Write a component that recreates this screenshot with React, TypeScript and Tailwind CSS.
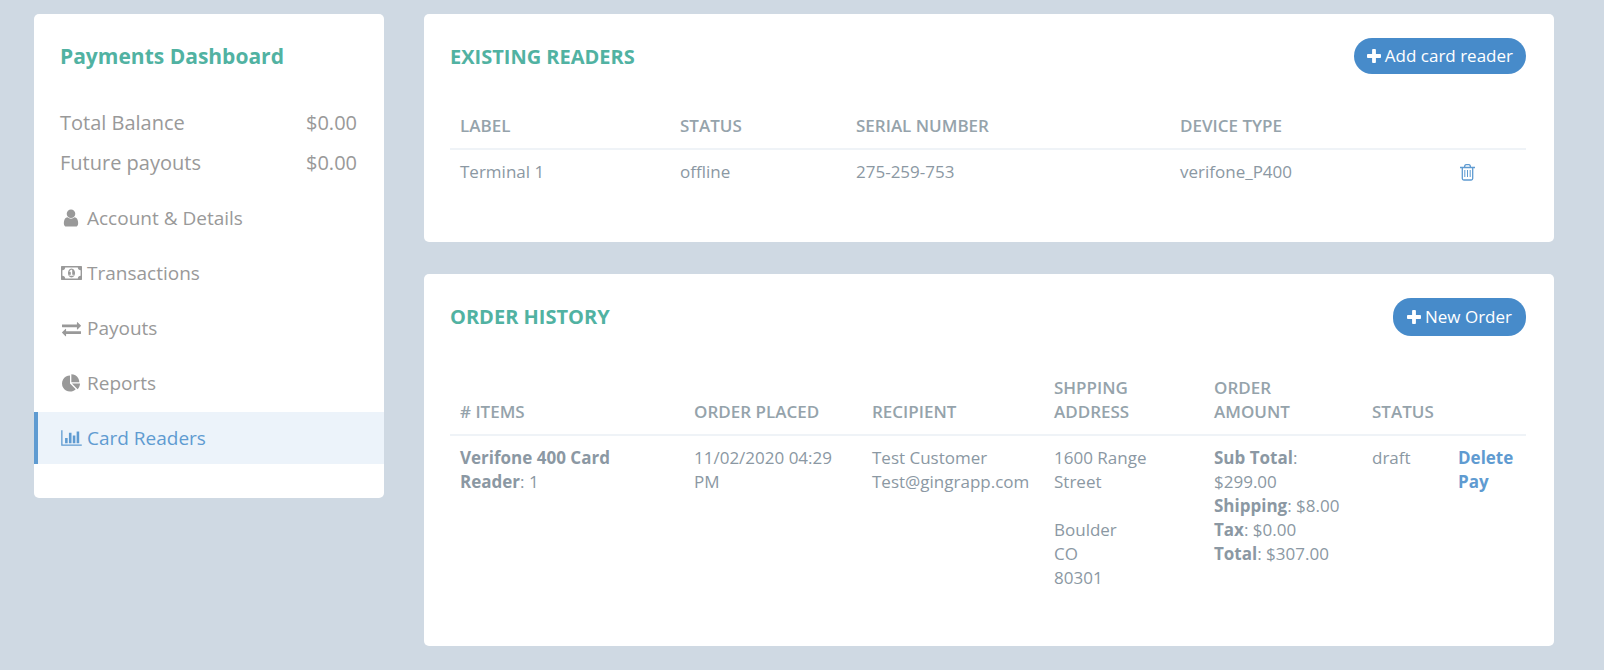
import type { ReactNode } from 'react';

interface IconProps {
  viewBox: string;
  className?: string;
  path: string;
}

const Icon: React.FC<IconProps> = ({ viewBox, className, path }) => (
  <svg viewBox={viewBox} className={className} fill="currentColor" aria-hidden="true">
    <path d={path} />
  </svg>
);

const paths = {
  plus: 'M1600 736v192q0 40-28 68t-68 28h-416v416q0 40-28 68t-68 28h-192q-40 0-68-28t-28-68v-416h-416q-40 0-68-28t-28-68v-192q0-40 28-68t68-28h416v-416q0-40 28-68t68-28h192q40 0 68 28t28 68v416h416q40 0 68 28t28 68z',
  user: 'M1536 1399q0 109-62.5 187t-150.5 78h-854q-88 0-150.5-78t-62.5-187q0-85 8.5-160.5t31.5-152 58.5-131 94-89 134.5-34.5q131 128 313 128t313-128q76 0 134.5 34.5t94 89 58.5 131 31.5 152 8.5 160.5zm-256-887q0 159-112.5 271.5t-271.5 112.5-271.5-112.5-112.5-271.5 112.5-271.5 271.5-112.5 271.5 112.5 112.5 271.5z',
  money: 'M768 1152h384v-96h-128v-448h-114l-148 137 77 80q42-37 55-57h2v288h-128v96zm512-256q0 70-21 142t-59.5 134-101.5 101-138 39-138-39-101.5-101-59.5-134-21-142 21-142 59.5-134 101.5-101 138-39 138 39 101.5 101 59.5 134 21 142zm512 256v-512q-106 0-181-75t-75-181h-1152q0 106-75 181t-181 75v512q106 0 181 75t75 181h1152q0-106 75-181t181-75zm128-832v1152q0 26-19 45t-45 19h-1792q-26 0-45-19t-19-45v-1152q0-26 19-45t45-19h1792q26 0 45 19t19 45z',
  exchange: 'M1792 1184v192q0 13-9.5 22.5t-22.5 9.5h-1376v192q0 13-9.5 22.5t-22.5 9.5q-12 0-24-10l-319-320q-9-9-9-22 0-14 9-23l320-320q9-9 23-9 13 0 22.5 9.5t9.5 22.5v192h1376q13 0 22.5 9.5t9.5 22.5zm0-544q0 14-9 23l-320 320q-9 9-23 9-13 0-22.5-9.5t-9.5-22.5v-192h-1376q-13 0-22.5-9.5t-9.5-22.5v-192q0-13 9.5-22.5t22.5-9.5h1376v-192q0-14 9-23t23-9q12 0 24 10l319 319q9 9 9 23z',
  pie: 'M768 890l546 546q-106 108-247.5 168t-298.5 60q-209 0-385.5-103t-279.5-279.5-103-385.5 103-385.5 279.5-279.5 385.5-103v762zm187 6h773q0 157-60 298.5t-168 247.5zm709-128h-768v-768q209 0 385.5 103t279.5 279.5 103 385.5z',
  bars: 'M640 896v512h-256v-512h256zm384-512v1024h-256v-1024h256zm1024 1152v128h-2048v-1536h128v1408h1920zm-640-896v768h-256v-768h256zm384-384v1152h-256v-1152h256z',
};

const balances = [
  { label: 'Total Balance', amount: '$0.00' },
  { label: 'Future payouts', amount: '$0.00' },
];

const navItems = [
  { label: 'Account & Details', viewBox: '0 0 1792 1792', path: paths.user, iconClass: 'size-5' },
  { label: 'Transactions', viewBox: '0 0 1920 1792', path: paths.money, iconClass: 'h-5 w-[21px]' },
  { label: 'Payouts', viewBox: '0 0 1792 1792', path: paths.exchange, iconClass: 'size-[19px]' },
  { label: 'Reports', viewBox: '0 0 1728 1792', path: paths.pie, iconClass: 'h-[19px] w-[18px]' },
  { label: 'Card Readers', viewBox: '0 0 2048 1792', path: paths.bars, iconClass: 'h-[18px] w-[21px]', active: true },
];

const Sidebar: React.FC = () => (
  <aside className="w-[350px] shrink-0 rounded-[5px] bg-white pt-6 pb-[34px] text-[#999]">
    <h1 className="px-[26px] text-[21px] leading-9 font-bold text-[#51b2a2]">Payments Dashboard</h1>
    <dl className="mt-[29px] px-[26px] text-xl leading-10">
      {balances.map((balance) => (
        <div key={balance.label} className="flex justify-between pr-px">
          <dt>{balance.label}</dt>
          <dd>{balance.amount}</dd>
        </div>
      ))}
    </dl>
    <nav className="mt-[9px] flex flex-col gap-[3px] text-[19px]">
      {navItems.map((item) => (
        <a
          key={item.label}
          href="#"
          className={
            item.active
              ? 'flex h-[52px] items-center gap-1 border-l-4 border-[#5f9bd1] bg-[#ecf3fa] pl-[21px] text-[#5f9bd1]'
              : 'flex h-[52px] items-center gap-1 border-l-4 border-transparent pl-[21px]'
          }
        >
          <span className="flex w-6 justify-center">
            <Icon viewBox={item.viewBox} path={item.path} className={item.iconClass} />
          </span>
          {item.label}
        </a>
      ))}
    </nav>
  </aside>
);

interface PanelProps {
  title: string;
  action: string;
  actionClass: string;
  children: ReactNode;
}

const Panel: React.FC<PanelProps> = ({ title, action, actionClass, children }) => (
  <section className="rounded-[5px] bg-white pt-6 pr-7 pb-[46px] pl-[26px]">
    <header className="flex items-start justify-between">
      <h2 className="text-xl leading-[38px] font-bold text-[#51b2a2]">{title}</h2>
      <button
        type="button"
        className={`flex items-center gap-1 rounded-[18px] bg-[#478bca] text-[17px] text-white ${actionClass}`}
      >
        <Icon viewBox="192 128 1408 1408" path={paths.plus} className="size-[14px]" />
        {action}
      </button>
    </header>
    {children}
  </section>
);

const TrashIcon: React.FC = () => (
  <svg viewBox="0 0 15 17" className="h-[17px] w-[15px]" fill="none" stroke="currentColor" aria-hidden="true">
    <path strokeWidth="1.3" d="M0 3.5h15M2.3 3.5v11q0 1.5 1.5 1.5h7.4q1.5 0 1.5-1.5v-11M4.5 3.3q.2-2.6 1.6-2.6h2.8q1.4 0 1.6 2.6" />
    <path d="M4.8 6v7M7.5 6v7M10.2 6v7" />
  </svg>
);

const ReadersTable: React.FC = () => (
  <table className="mt-7 mb-[2px] w-full table-fixed text-left text-[17px] leading-6">
    <colgroup>
      <col className="w-[220px]" />
      <col className="w-[176px]" />
      <col className="w-[324px]" />
      <col className="w-[280px]" />
      <col />
    </colgroup>
    <thead className="text-[#95a3ab]">
      <tr className="border-b-2 border-[#eff3f7]">
        <th className="p-[10px] font-semibold">LABEL</th>
        <th className="p-[10px] font-semibold">STATUS</th>
        <th className="p-[10px] font-semibold">SERIAL NUMBER</th>
        <th className="p-[10px] font-semibold">DEVICE TYPE</th>
        <td />
      </tr>
    </thead>
    <tbody>
      <tr>
        <td className="p-[10px]">Terminal 1</td>
        <td className="p-[10px]">offline</td>
        <td className="p-[10px]">275-259-753</td>
        <td className="p-[10px]">verifone_P400</td>
        <td className="p-[10px]">
          <button type="button" aria-label="Delete reader" className="block text-[#5f9bd1]">
            <TrashIcon />
          </button>
        </td>
      </tr>
    </tbody>
  </table>
);

const OrdersTable: React.FC = () => (
  <table className="mt-[30px] w-full table-fixed text-left text-[17px] leading-6">
    <colgroup>
      <col className="w-[234px]" />
      <col className="w-[178px]" />
      <col className="w-[182px]" />
      <col className="w-[160px]" />
      <col className="w-[158px]" />
      <col className="w-[86px]" />
      <col />
    </colgroup>
    <thead className="align-bottom text-[#95a3ab]">
      <tr className="border-b-2 border-[#eff3f7]">
        <th className="p-[10px] font-semibold"># ITEMS</th>
        <th className="p-[10px] font-semibold">ORDER PLACED</th>
        <th className="p-[10px] font-semibold">RECIPIENT</th>
        <th className="p-[10px] font-semibold">SHPPING ADDRESS</th>
        <th className="p-[10px] font-semibold">ORDER<br />AMOUNT</th>
        <th className="p-[10px] font-semibold">STATUS</th>
        <td />
      </tr>
    </thead>
    <tbody className="align-top">
      <tr>
        <td className="p-[10px]">
          <b>Verifone 400 Card</b><br />
          <b>Reader</b>: 1
        </td>
        <td className="p-[10px]">11/02/2020 04:29 PM</td>
        <td className="p-[10px]">Test Customer<br />Test@gingrapp.com</td>
        <td className="p-[10px]">
          1600 Range<br />Street<br /><br />Boulder<br />CO<br />80301
        </td>
        <td className="p-[10px]">
          <b>Sub Total</b>:<br />$299.00<br />
          <b>Shipping</b>: $8.00<br />
          <b>Tax</b>: $0.00<br />
          <b>Total</b>: $307.00
        </td>
        <td className="p-[10px]">draft</td>
        <td className="p-[10px] font-bold text-[#5f9bd1]">
          <a href="#" className="block">Delete</a>
          <a href="#" className="block">Pay</a>
        </td>
      </tr>
    </tbody>
  </table>
);

const App: React.FC = () => (
  <div className="flex min-h-screen items-start gap-10 bg-[#cfd9e3] pt-[14px] pr-[50px] pb-6 pl-[34px] font-['Open_Sans',sans-serif] text-[#8b98a3]">
    <Sidebar />
    <main className="flex min-w-0 flex-1 flex-col gap-8">
      <Panel title="EXISTING READERS" action="Add card reader" actionClass="h-9 px-[13px]">
        <ReadersTable />
      </Panel>
      <Panel title="ORDER HISTORY" action="New Order" actionClass="h-[38px] px-[14px]">
        <OrdersTable />
      </Panel>
    </main>
  </div>
);

export default App;
